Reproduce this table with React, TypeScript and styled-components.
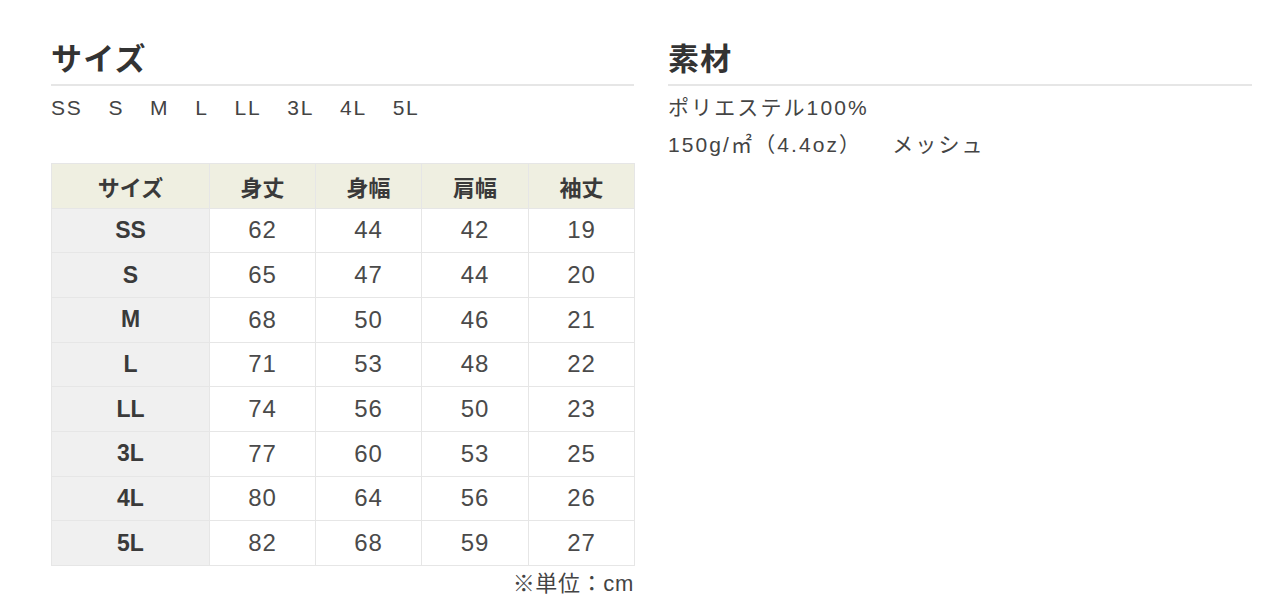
import React, { FC } from "react";
import styled, { createGlobalStyle } from "styled-components";

const GlobalStyle = createGlobalStyle`
  body {
    margin: 0;
    background: #fff;
    color: #3a3a3a;
    font-family: "Liberation Sans", "Noto Sans CJK JP", sans-serif;
  }
`;

interface SizeRow {
  size: string;
  length: number;
  width: number;
  shoulder: number;
  sleeve: number;
}

const rows: SizeRow[] = [
  { size: "SS", length: 62, width: 44, shoulder: 42, sleeve: 19 },
  { size: "S", length: 65, width: 47, shoulder: 44, sleeve: 20 },
  { size: "M", length: 68, width: 50, shoulder: 46, sleeve: 21 },
  { size: "L", length: 71, width: 53, shoulder: 48, sleeve: 22 },
  { size: "LL", length: 74, width: 56, shoulder: 50, sleeve: 23 },
  { size: "3L", length: 77, width: 60, shoulder: 53, sleeve: 25 },
  { size: "4L", length: 80, width: 64, shoulder: 56, sleeve: 26 },
  { size: "5L", length: 82, width: 68, shoulder: 59, sleeve: 27 },
];

const sizes = ["SS", "S", "M", "L", "LL", "3L", "4L", "5L"];

const App: FC = () => {
  return (
    <>
      <GlobalStyle />
      <Page>
        <Section>
          <Heading>サイズ</Heading>
          <SizeList>
            {sizes.map((s) => (
              <SizeItem key={s}>{s}</SizeItem>
            ))}
          </SizeList>
          <Table>
            <colgroup>
              <col style={{ width: 158 }} />
              <col style={{ width: 106 }} />
              <col style={{ width: 106 }} />
              <col style={{ width: 107 }} />
              <col style={{ width: 106 }} />
            </colgroup>
            <thead>
              <tr>
                <Th>サイズ</Th>
                <Th>身丈</Th>
                <Th>身幅</Th>
                <Th>肩幅</Th>
                <Th>袖丈</Th>
              </tr>
            </thead>
            <tbody>
              {rows.map((r) => (
                <tr key={r.size}>
                  <RowHead>{r.size}</RowHead>
                  <Td>{r.length}</Td>
                  <Td>{r.width}</Td>
                  <Td>{r.shoulder}</Td>
                  <Td>{r.sleeve}</Td>
                </tr>
              ))}
            </tbody>
          </Table>
          <Note>※単位：cm</Note>
        </Section>
        <Section>
          <Heading>素材</Heading>
          <Text>ポリエステル100%</Text>
          <Text>
            150g/㎡（4.4oz）<Spacer />メッシュ
          </Text>
        </Section>
      </Page>
    </>
  );
};

export default App;

const Page = styled.div`
  display: grid;
  grid-template-columns: 583px 584px;
  column-gap: 34px;
  padding: 40px 0 0 51px;
`;

const Section = styled.section`
  display: flex;
  flex-direction: column;
`;

const Heading = styled.h2`
  margin: 0;
  font-size: 31px;
  line-height: 40px;
  font-weight: 700;
  color: #333;
  letter-spacing: 0.04em;
  padding-bottom: 4px;
  border-bottom: 2px solid #e6e6e6;
`;

const SizeList = styled.div`
  display: flex;
  gap: 26px;
  font-size: 21px;
  line-height: 36px;
  margin-top: 4px;
  letter-spacing: 0.08em;
  color: #444;
`;

const SizeItem = styled.span``;

const Table = styled.table`
  margin-top: 37px;
  width: 583px;
  border-collapse: collapse;
  table-layout: fixed;
`;

const Th = styled.th`
  height: 43.67px;
  padding: 0;
  background: #efefe1;
  border: 1px solid #e6e6e6;
  font-size: 22px;
  font-weight: 700;
  color: #3a3a3a;
  text-align: center;
`;

const RowHead = styled.th`
  height: 43.67px;
  padding: 0;
  background: #f0f0f0;
  border: 1px solid #e6e6e6;
  font-size: 23px;
  font-weight: 700;
  color: #3a3a3a;
  text-align: center;
`;

const Td = styled.td`
  height: 43.67px;
  padding: 0;
  border: 1px solid #e6e6e6;
  font-size: 24px;
  letter-spacing: 0.04em;
  text-align: center;
  color: #4a4a4a;
`;

const Note = styled.div`
  text-align: right;
  font-size: 22px;
  line-height: 36px;
  letter-spacing: 0.03em;
  color: #444;
`;

const Text = styled.div`
  font-size: 21px;
  line-height: 37px;
  letter-spacing: 0.1em;
  color: #444;
  &:first-of-type {
    margin-top: 3px;
  }
`;

const Spacer = styled.span`
  display: inline-block;
  width: 30px;
`;
